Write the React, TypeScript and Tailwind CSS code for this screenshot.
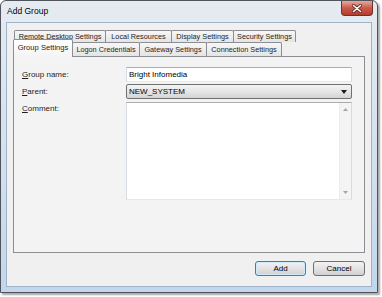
import React from 'react';

const ROW1 = [
  { label: 'Remote Desktop Settings', w: 92 },
  { label: 'Local Resources', w: 67 },
  { label: 'Display Settings', w: 63 },
  { label: 'Security Settings', w: 63 },
];

const ROW2 = [
  { label: 'Logon Credentials', w: 68 },
  { label: 'Gateway Settings', w: 68 },
  { label: 'Connection Settings', w: 76 },
];

const Tab: React.FC<{ label: string; w: number; first?: boolean }> = ({ label, w, first }) => (
  <div
    style={{ width: w }}
    className={`h-full flex items-center justify-center border border-b-0 border-[#8c8e94] rounded-t-[2px] bg-gradient-to-b from-[#f7f7f7] to-[#e4e4e4] text-[7.3px] leading-none text-[#1e1e1e] whitespace-nowrap ${first ? '' : '-ml-px'}`}
  >
    {label}
  </div>
);

const Label: React.FC<{ k: string; rest: string }> = ({ k, rest }) => (
  <span className="text-[8px] leading-[10px] text-[#1e1e1e]">
    <span className="underline underline-offset-1">{k}</span>
    {rest}
  </span>
);

export default function App() {
  return (
    <div className="w-[382px] h-[297px] bg-white font-['Liberation_Sans',Arial,sans-serif]">
      <div className="w-[378px] h-[293px] flex flex-col rounded-t-[6px] border border-[#50555d] bg-gradient-to-b from-[#e6ebf1] via-[#d5e1ee] to-[#c3d6ec] shadow-[2px_2px_2px_rgba(0,0,0,0.35)]">
        {/* Title bar */}
        <div className="h-[21px] flex items-start justify-between">
          <span className="pl-[6px] pt-[5px] text-[8.5px] leading-[10px] text-black">Add Group</span>
          <button className="mr-[4px] w-[32px] h-[15px] flex items-center justify-center rounded-b-[4px] border border-t-0 border-[#6e3028] bg-gradient-to-b from-[#e4a99c] via-[#c95a4b] to-[#b53b2c]">
            <svg width="10" height="9" viewBox="0 0 10 9">
              <path d="M1.5 1.5 L8.5 7.5 M8.5 1.5 L1.5 7.5" stroke="#5a2a24" strokeWidth="3" strokeLinecap="round" />
              <path d="M1.5 1.5 L8.5 7.5 M8.5 1.5 L1.5 7.5" stroke="#ffffff" strokeWidth="1.6" strokeLinecap="round" />
            </svg>
          </button>
        </div>

        {/* Client area */}
        <div className="mx-[5px] h-[265px] border border-[#9fb3c9] bg-[#f0f0f0] flex flex-col">
          <div className="ml-[6px] mt-[7px] flex flex-col">
            <div className="h-[12px] pl-px flex">
              {ROW1.map((t, i) => (
                <Tab key={t.label} label={t.label} w={t.w} first={i === 0} />
              ))}
            </div>
            <div className="h-[14px] flex items-end">
              <div className="relative z-10 w-[60px] h-[18px] -mb-px flex items-center justify-center pb-[2px] border border-b-0 border-[#8c8e94] rounded-t-[2px] bg-gradient-to-b from-[#ffffff] to-[#f4f4f4] text-[7.6px] leading-none text-[#1e1e1e]">
                Group Settings
              </div>
              {ROW2.map(t => (
                <div key={t.label} className="h-full flex">
                  <Tab label={t.label} w={t.w} />
                </div>
              ))}
            </div>

            {/* Panel */}
            <div className="w-[352px] h-[197px] border border-[#8c8e94] bg-[#f3f3f3] pl-[8px] pt-[10px] grid grid-cols-[104px_226px] content-start">
              <div className="h-[15px] flex items-center">
                <Label k="G" rest="roup name:" />
              </div>
              <div className="h-[15px] flex items-center px-[2px] border border-[#abadb3] border-l-[#d4dbe3] border-r-[#d4dbe3] border-b-[#e3e9ef] bg-white text-[8px] leading-none text-black">
                Bright Infomedia
              </div>

              <div className="mt-[2px] h-[15px] flex items-center">
                <Label k="P" rest="arent:" />
              </div>
              <div className="mt-[2px] h-[15px] flex items-center justify-between pl-[2px] pr-[4px] rounded-[2px] border border-[#707070] bg-gradient-to-b from-[#f3f3f3] via-[#e6e6e6] to-[#d4d4d4] text-[8px] leading-none text-black">
                <span>NEW_SYSTEM</span>
                <svg width="6" height="4" viewBox="0 0 6 4">
                  <path d="M0 0 H6 L3 4 Z" fill="#1a1a1a" />
                </svg>
              </div>

              <div className="mt-[3px] pt-[2px] flex items-start">
                <Label k="C" rest="omment:" />
              </div>
              <div className="mt-[3px] h-[98px] flex border border-[#abadb3] border-l-[#d4dbe3] border-r-[#d4dbe3] border-b-[#e3e9ef] bg-white">
                <div className="flex-1" />
                <div className="w-[12px] flex flex-col justify-between items-center py-[5px] bg-[#f4f4f4] border-l border-[#ececec]">
                  <svg width="5" height="3" viewBox="0 0 5 3">
                    <path d="M0 3 H5 L2.5 0 Z" fill="#a5a5a5" />
                  </svg>
                  <svg width="5" height="3" viewBox="0 0 5 3">
                    <path d="M0 0 H5 L2.5 3 Z" fill="#a5a5a5" />
                  </svg>
                </div>
              </div>
            </div>
          </div>

          {/* Buttons */}
          <div className="mt-[8px] pr-[6px] flex justify-end gap-[7px]">
            <button className="w-[51px] h-[15px] flex items-center justify-center rounded-[3px] border border-[#3c7fb1] bg-gradient-to-b from-[#f2f2f2] via-[#e3e3e3] to-[#d0d0d0] shadow-[inset_0_0_0_1px_#cfeaf9] text-[8px] leading-none text-black">
              Add
            </button>
            <button className="w-[52px] h-[15px] flex items-center justify-center rounded-[3px] border border-[#707070] bg-gradient-to-b from-[#f2f2f2] via-[#e3e3e3] to-[#d0d0d0] text-[8px] leading-none text-black">
              Cancel
            </button>
          </div>
        </div>
      </div>
    </div>
  );
}
